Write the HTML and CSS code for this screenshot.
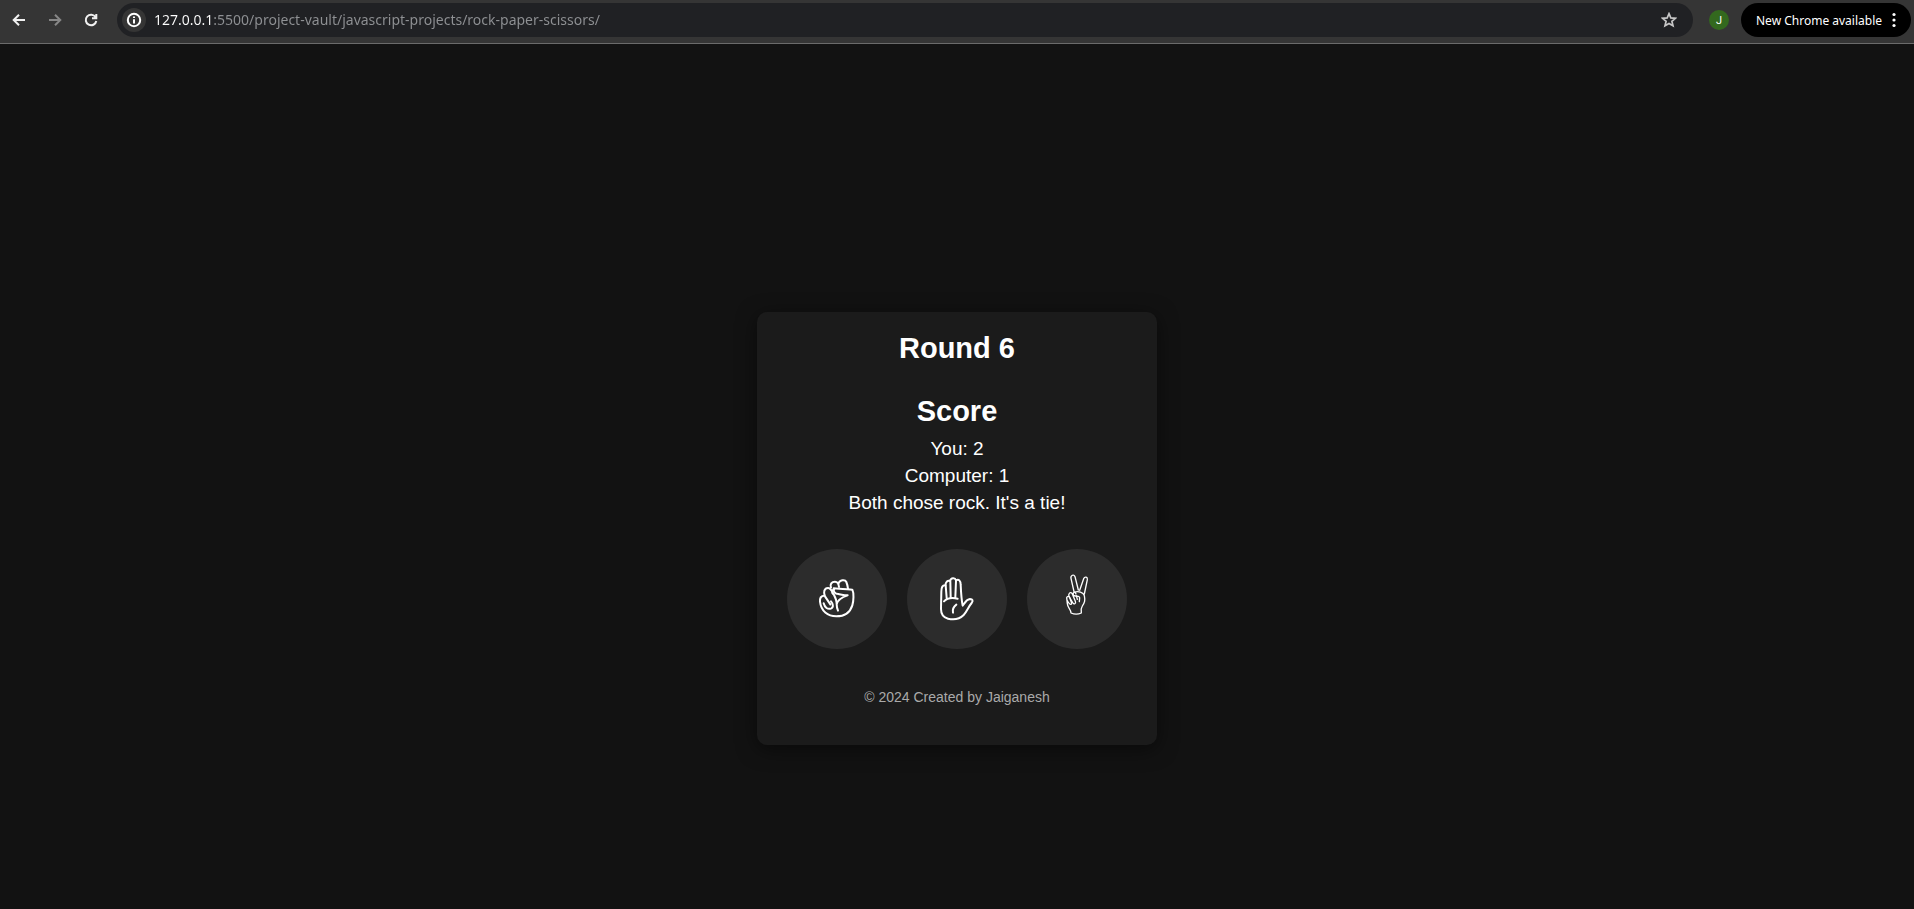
FILE: index.html
```html
<!DOCTYPE html>
<html lang="en">
<head>
  <meta charset="utf-8">
  <meta name="viewport" content="width=device-width, initial-scale=1">
  <title>Rock Paper Scissors</title>
  <link rel="stylesheet" href="styles.css">
</head>
<body>
  <header class="toolbar">
    <nav class="nav-buttons" aria-label="History">
      <button class="icon-button" type="button" aria-label="Back">
        <svg viewBox="0 0 16 16"><path d="M14 8H3M8 2.700L2.700 8L8 13.300"/></svg>
      </button>
      <button class="icon-button icon-button-dim" type="button" aria-label="Forward">
        <svg viewBox="0 0 16 16"><path d="M2 8H13M8 2.700L13.300 8L8 13.300"/></svg>
      </button>
      <button class="icon-button" type="button" aria-label="Reload">
        <svg viewBox="0 0 16 16"><path d="M12.600 5.200A5.300 5.300 0 1 0 13.300 9M13.300 2V6.200H9"/></svg>
      </button>
    </nav>
    <div class="address-bar">
      <button class="site-info" type="button" aria-label="Site information">
        <svg viewBox="0 0 16 16"><circle cx="8" cy="8" r="6.200"/><path d="M8 7.300V11.500M8 4.500V6.100"/></svg>
      </button>
      <input class="address" type="text" aria-label="Address" spellcheck="false" value="127.0.0.1:5500/project-vault/javascript-projects/rock-paper-scissors/">
      <button class="bookmark" type="button" aria-label="Bookmark this page">
        <svg viewBox="0 0 16 16"><path d="M8 1.700L9.800 5.900L14.400 6.300L10.900 9.300L12 13.800L8 11.400L4 13.800L5.100 9.300L1.600 6.300L6.200 5.900Z"/></svg>
      </button>
    </div>
    <button class="avatar" type="button" aria-label="Profile J">J</button>
    <button class="update" type="button">
      <span>New Chrome available</span>
      <svg viewBox="0 0 4 16"><circle cx="2" cy="2.500" r="1.600"/><circle cx="2" cy="8" r="1.600"/><circle cx="2" cy="13.500" r="1.600"/></svg>
    </button>
  </header>

  <main class="page">
    <section class="card">
      <h1 class="heading">Round 6</h1>
      <div class="score">
        <h2 class="heading">Score</h2>
        <div class="lines">
          <p>You: 2</p>
          <p>Computer: 1</p>
          <p>Both chose rock. It's a tie!</p>
        </div>
      </div>
      <div class="choices">
        <button class="choice" type="button" aria-label="Rock">
          <svg viewBox="3 0 180 180">
            <path d="M53 80C45 81 41 87 42 98C45 126 65 142 91 142C117 142 133 128 139 109C143 96 144 72 139 62C126 61 104 60 83 58C82 67 86 75 97 75C108 77 116 79 125 79C110 84 95 94 92 105C92 112 93 118 96 125"/>
            <path d="M75 56C71 45 77 38 87 38C94 38 98 44 99 54M98 43C101 33 117 30 121 39C124 46 125 52 126 59"/>
            <path d="M57 82C51 70 55 57 66 57C74 57 77 65 82 74C87 84 92 92 92 103M57 82L73 106M84 61C77 65 76 70 82 76"/>
            <path d="M53 103C56 115 65 123 76 118C84 114 80 103 75 97"/>
          </svg>
        </button>
        <button class="choice" type="button" aria-label="Paper">
          <svg viewBox="3 0 180 180">
            <path d="M46 68C46 54 50 48 58 49C59 38 65 33 72 36C75 26 87 25 90 34C98 29 104 35 104 47C105 70 106 91 110 110C118 100 121 91 132 90C140 90 142 95 137 102C128 112 123 128 113 138C101 150 82 153 66 149C51 145 45 136 45 120Z"/>
            <path d="M59 49L62 87M73 37L74 83M90 35L88 85M54 97C64 86 82 86 95 89M91 107C83 113 79 121 81 131"/>
          </svg>
        </button>
        <button class="choice choice-thin" type="button" aria-label="Scissors">
          <svg viewBox="3 0 180 180">
            <path d="M84 68L75 28C73 19 84 14 87 23L97 63M101 64L113 29C117 21 125 24 124 32L115 75"/>
            <path d="M85 70C97 65 112 70 115 80C118 95 116 100 109 111C105 117 104 123 106 132C95 137 86 137 75 132C75 121 65 117 64 104L62 86C64 80 71 81 72 88C74 97 80 104 75 106C70 107 67 101 63 93"/>
            <path d="M69 83C66 74 73 67 78 73L88 97C91 105 84 107 80 101L70 84M82 77C80 69 87 67 90 75M84 80C92 84 99 78 101 86L100 98M91 80L94 91"/>
          </svg>
        </button>
      </div>
      <footer class="credit">© 2024 Created by Jaiganesh</footer>
    </section>
  </main>
</body>
</html>
```
FILE: styles.css
```css
* {
  box-sizing: border-box;
}

body {
  display: flex;
  flex-direction: column;
  min-height: 100vh;
  margin: 0;
  background: #121212;
  color: #fff;
  font-family: "Liberation Sans", Arial, sans-serif;
}

button,
input {
  margin: 0;
  padding: 0;
  border: 0;
  background: none;
  color: inherit;
  font: inherit;
}

button {
  display: flex;
  align-items: center;
  justify-content: center;
  flex: none;
  cursor: pointer;
}

h1,
h2,
p {
  margin: 0;
}

svg {
  display: block;
  fill: none;
  stroke: currentColor;
}

.toolbar {
  display: flex;
  align-items: center;
  padding: 3px 3px 6px 7px;
  border-bottom: 1px solid #6b6b6b;
  background: #353535;
  font-family: "Noto Sans", sans-serif;
}

.nav-buttons {
  display: flex;
  gap: 12px;
  margin-right: 14px;
}

.icon-button {
  width: 24px;
  height: 24px;
  color: #f1f1f1;
}

.icon-button svg,
.site-info svg,
.bookmark svg {
  width: 16px;
  height: 16px;
  stroke-width: 2;
}

.icon-button-dim {
  color: #868686;
}

.address-bar {
  display: flex;
  align-items: center;
  flex: 1;
  height: 34px;
  padding: 0 16px 0 5px;
  border-radius: 17px;
  background: #202124;
}

.site-info {
  width: 24px;
  height: 24px;
  border-radius: 50%;
  background: #353535;
}

.address {
  flex: 1;
  min-width: 0;
  height: 24px;
  margin-left: 8px;
  padding-bottom: 2px;
  background: linear-gradient(90deg, #fff 60px, #8f9194 60px);
  background-clip: text;
  color: transparent;
  font-size: 14px;
  outline: 0;
}

.bookmark {
  color: #c7c7c7;
}

.bookmark svg {
  stroke-width: 1.7;
}

.avatar {
  width: 20px;
  height: 20px;
  margin: 0 12px 0 16px;
  border-radius: 50%;
  background: #33691e;
  font-family: Roboto, sans-serif;
  font-size: 11px;
}

.update {
  gap: 10px;
  height: 34px;
  padding: 0 15px;
  border-radius: 17px;
  background: #000;
  font-size: 12px;
}

.update svg {
  width: 4px;
  height: 16px;
  fill: #fff;
  stroke: none;
}

.page {
  display: flex;
  align-items: center;
  justify-content: center;
  flex: 1;
  padding-top: 104px;
}

.card {
  width: 400px;
  max-width: 100%;
  padding: 20px 20px 38px;
  border-radius: 10px;
  background: #1b1b1b;
  box-shadow: 0 4px 20px rgba(0, 0, 0, 0.5);
  text-align: center;
}

.heading {
  font-size: 29px;
  line-height: 32px;
}

.score {
  margin-top: 31px;
}

.lines {
  margin-top: 8px;
  font-size: 19px;
  line-height: 27px;
}

.choices {
  display: flex;
  justify-content: center;
  gap: 20px;
  margin-top: 33px;
}

.choice {
  width: 100px;
  height: 100px;
  border-radius: 50%;
  background: #2c2c2c;
}

.choice svg {
  width: 60px;
  height: 60px;
  stroke-width: 6;
  stroke-linecap: round;
  stroke-linejoin: round;
}

.choice-thin svg {
  stroke-width: 4;
}

.credit {
  margin-top: 38px;
  color: #aaa;
  font-size: 14px;
  line-height: 20px;
}
```
